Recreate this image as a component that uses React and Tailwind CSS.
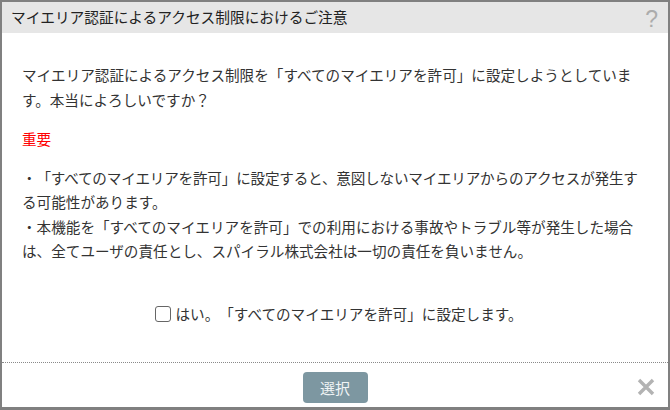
import React from "react";

export default function App() {
  const font = { fontFamily: '"Noto Sans CJK JP", "Noto Sans", sans-serif' };
  return (
    <div
      className="w-[670px] h-[410px] bg-white border-[#808080] border-t-2 border-l-2 border-r-2 border-b-[3px] flex flex-col text-[#333] [text-spacing-trim:space-all]"
      style={font}
    >
      <div className="h-[31px] shrink-0 bg-[#e6e6e6] flex items-center justify-between pl-[9px] pr-[10px]">
        <div className="text-[14.7px] leading-none text-[#222] whitespace-nowrap">
          マイエリア認証によるアクセス制限におけるご注意
        </div>
        <div className="text-[23px] leading-none text-[#acacac] mt-[3px]" style={{ fontFamily: '"Liberation Sans", sans-serif' }}>?</div>
      </div>
      <div className="h-[329px] shrink-0 pl-[20px] pt-[30px] text-[14.6px] leading-[24.5px]">
        <div className="whitespace-nowrap">マイエリア認証によるアクセス制限を「すべてのマイエリアを許可」に設定しようとしていま</div>
        <div className="whitespace-nowrap">す。本当によろしいですか？</div>
        <div className="mt-[15px] text-[#ff0000] whitespace-nowrap">重要</div>
        <div className="mt-[14px]">
          <div className="whitespace-nowrap tracking-[-0.2px]">・「すべてのマイエリアを許可」に設定すると、意図しないマイエリアからのアクセスが発生す</div>
          <div className="whitespace-nowrap">る可能性があります。</div>
          <div className="whitespace-nowrap">・本機能を「すべてのマイエリアを許可」での利用における事故やトラブル等が発生した場合</div>
          <div className="whitespace-nowrap">は、全てユーザの責任とし、スパイラル株式会社は一切の責任を負いません。</div>
        </div>
        <div className="mt-[38px] flex items-center justify-center pr-[12px]">
          <span className="w-[16px] h-[16px] border border-[#666] rounded-[3px] bg-white mr-[4px]"></span>
          <span className="whitespace-nowrap">はい。「すべてのマイエリアを許可」に設定します。</span>
        </div>
      </div>
      <div className="flex-1 border-t border-dotted border-[#8a8a8a] relative flex justify-center pt-[9px]">
        <button className="w-[65px] h-[31px] rounded-[4px] bg-[#7d97a1] text-[#f0f4f5] text-[15px] leading-none" style={font}>
          選択
        </button>
        <svg className="absolute right-[13px] top-[15px]" width="18" height="18" viewBox="0 0 18 18">
          <path d="M2 2 L16 16 M16 2 L2 16" stroke="#b3b3b3" strokeWidth="3.4" strokeLinecap="butt" />
        </svg>
      </div>
    </div>
  );
}
